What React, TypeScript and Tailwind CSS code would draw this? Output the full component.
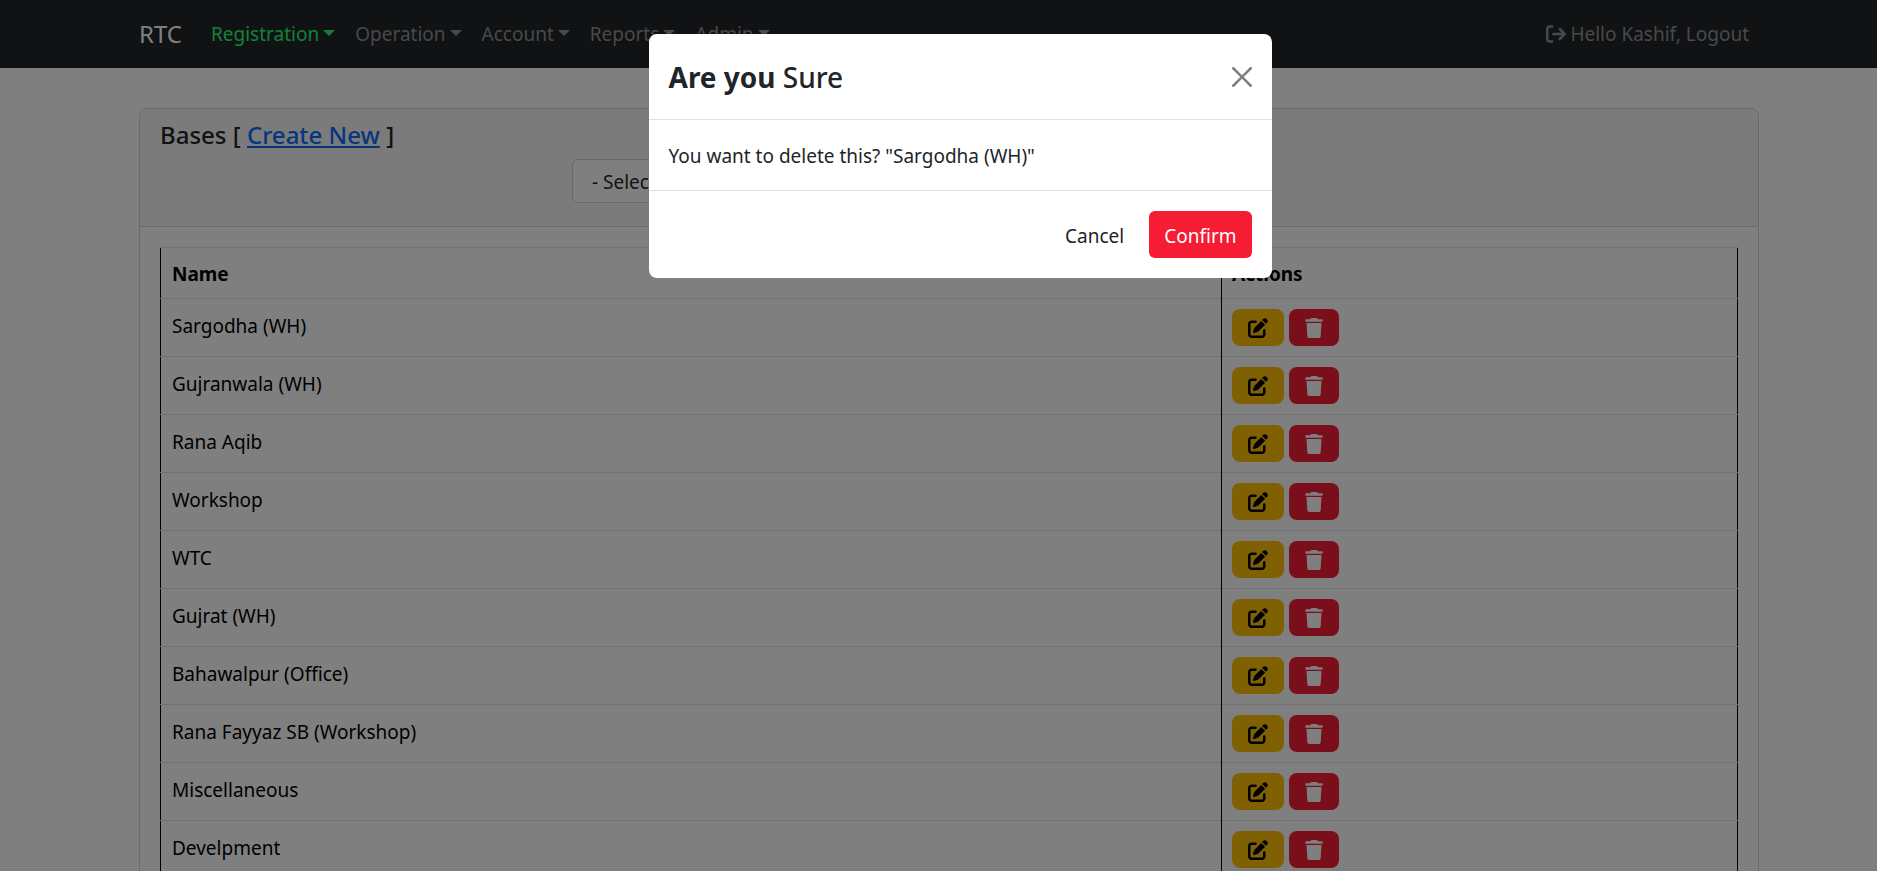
import { useState } from "react";
import { FaArrowRightFromBracket, FaPenToSquare, FaTrash } from "react-icons/fa6";

const menus = ["Registration", "Operation", "Account", "Reports", "Admin"];

const bases = [
  "Sargodha (WH)",
  "Gujranwala (WH)",
  "Rana Aqib",
  "Workshop",
  "WTC",
  "Gujrat (WH)",
  "Bahawalpur (Office)",
  "Rana Fayyaz SB (Workshop)",
  "Miscellaneous",
  "Develpment",
];

function Navbar() {
  return (
    <nav className="h-[68px] bg-[#212529] pl-[21px]">
      <div className="mx-auto flex h-full max-w-[1620px] items-center">
        <a href="#" className="mr-[19px] text-2xl text-white">
          RTC
        </a>
        <div className="flex flex-1">
          {menus.map((menu, i) => (
            <button
              key={menu}
              type="button"
              className={`flex items-center gap-1 px-[10px] py-2 ${
                i === 0 ? "text-[#28ff70]" : "text-[#909294]"
              }`}
            >
              {menu}
              <span className="mb-0.5 border-x-[6px] border-t-[6px] border-x-transparent border-t-current" />
            </button>
          ))}
        </div>
        <a href="#" className="flex items-center gap-1 px-[10px] text-[#909294]">
          <FaArrowRightFromBracket className="size-5" />
          Hello Kashif, Logout
        </a>
      </div>
    </nav>
  );
}

function BasesCard({ onDelete }: { onDelete: (name: string) => void }) {
  return (
    <div className="rounded-lg border border-[#d3d4d5]">
      <div className="h-[118px] rounded-t-lg border-b border-[#d3d4d5] bg-[#f7f7f7] px-5 pt-[10px]">
        <h5 className="text-2xl font-medium">
          Bases [{" "}
          <a href="#" className="text-[#0d6efd] underline">
            Create New
          </a>{" "}
          ]
        </h5>
        <select
          aria-label="Filter bases"
          className="mt-2 ml-[412px] h-[44px] w-[600px] appearance-none rounded-md border border-[#ced4da] bg-white px-[19px] pt-0.5"
        >
          <option>- Select -</option>
        </select>
      </div>
      <div className="p-5">
        <table className="w-full border-collapse border-x border-black text-left text-black">
          <thead>
            <tr className="h-[51px] border-y border-[#dee2e6]">
              <th className="border-r border-r-black px-[11px] pt-0.5 font-bold">Name</th>
              <th className="w-[516px] px-[10px] pt-0.5 font-bold">Actions</th>
            </tr>
          </thead>
          <tbody>
            {bases.map((name) => (
              <tr key={name} className="h-[58px] border-b border-[#dee2e6]">
                <td className="border-r border-r-black px-[11px] pt-3 align-top">{name}</td>
                <td className="px-[10px]">
                  <div className="flex gap-[5px]">
                    <button
                      type="button"
                      title="Edit"
                      className="flex h-[37px] w-[52px] items-center justify-center rounded-lg bg-[#ffc107] text-black"
                    >
                      <FaPenToSquare className="size-5" />
                    </button>
                    <button
                      type="button"
                      title="Delete"
                      onClick={() => onDelete(name)}
                      className="flex h-[37px] w-[50px] items-center justify-center rounded-lg bg-[#f51c34] text-white"
                    >
                      <FaTrash className="size-5" />
                    </button>
                  </div>
                </td>
              </tr>
            ))}
          </tbody>
        </table>
      </div>
    </div>
  );
}

function ConfirmModal({ name, onClose }: { name: string; onClose: () => void }) {
  return (
    <div className="fixed inset-0 bg-black/50 pt-[34px] pl-[43px]">
      <div role="dialog" aria-modal="true" className="mx-auto max-w-[623px] rounded-lg bg-white">
        <div className="flex h-[86px] items-center justify-between border-b border-[#dee2e6] px-5">
          <h3 className="text-[28px] font-medium">
            <b className="font-bold">Are you</b> Sure
          </h3>
          <button type="button" aria-label="Close" onClick={onClose} className="text-[#7f7f7f]">
            <svg viewBox="0 0 16 16" className="size-5" fill="currentColor">
              <path d="M.293.293a1 1 0 0 1 1.414 0L8 6.586 14.293.293a1 1 0 1 1 1.414 1.414L9.414 8l6.293 6.293a1 1 0 0 1-1.414 1.414L8 9.414l-6.293 6.293a1 1 0 0 1-1.414-1.414L6.586 8 .293 1.707a1 1 0 0 1 0-1.414z" />
            </svg>
          </button>
        </div>
        <p className="flex h-[70px] items-center px-5 pt-0.5">You want to delete this? "{name}"</p>
        <div className="flex items-center justify-end gap-[10px] border-t border-[#dee2e6] p-5">
          <button type="button" onClick={onClose} className="h-[47px] rounded-md px-[15px] pt-0.5">
            Cancel
          </button>
          <button
            type="button"
            onClick={onClose}
            className="h-[47px] rounded-md bg-[#f51c34] px-[15px] pt-0.5 text-white"
          >
            Confirm
          </button>
        </div>
      </div>
    </div>
  );
}

export default function App() {
  const [pending, setPending] = useState<string | null>(bases[0]);

  return (
    <div className="h-screen overflow-hidden bg-white font-['Noto_Sans','Open_Sans',sans-serif] text-[19px] leading-[30px] text-[#212529]">
      <Navbar />
      <main className="pt-10 pl-[21px]">
        <div className="mx-auto max-w-[1620px]">
          <BasesCard onDelete={setPending} />
        </div>
      </main>
      {pending && <ConfirmModal name={pending} onClose={() => setPending(null)} />}
    </div>
  );
}
